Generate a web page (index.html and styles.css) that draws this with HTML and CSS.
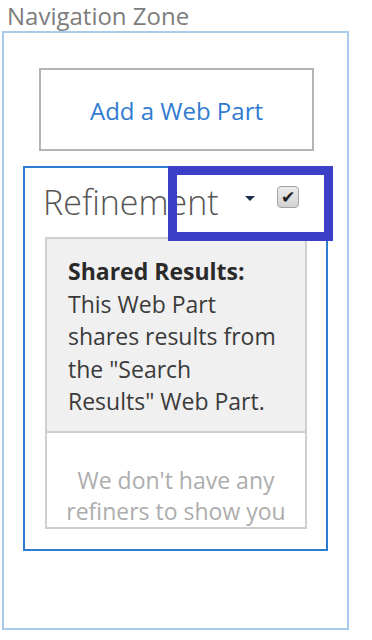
FILE: index.html
```html
<!DOCTYPE html>
<html lang="en">
<head>
    <meta charset="UTF-8">
    <meta name="viewport" content="width=device-width, initial-scale=1.0">
    <title>Navigation Zone</title>
    <link rel="stylesheet" href="styles.css">
</head>
<body>
    <div class="zone-title">Navigation Zone</div>
    <div class="zone">
        <div class="add-part">Add a Web Part</div>

        <div class="webpart">
            <div class="webpart-head">
                <span class="webpart-title">Refinement</span>
                <span class="menu-arrow"></span>
                <span class="select-box">&#10004;</span>
            </div>
            <div class="panel">
                <div class="shared">
                    <b>Shared Results:</b><br>
                    This Web Part shares results from the "Search Results" Web Part.
                </div>
                <div class="empty">We don't have any refiners to show you</div>
            </div>
            <!-- callout around the menu + checkbox -->
            <div class="highlight"></div>
        </div>
    </div>
</body>
</html>
```

FILE: styles.css
```css
body {
    margin: 0;
    background: #fff;
    font-family: 'Open Sans', sans-serif;
}
.zone-title {
    height: 31px;
    padding-left: 7px;
    font-size: 24px;
    line-height: 32px;
    color: #7d7d7d;
    white-space: nowrap;
}
.zone {
    box-sizing: border-box;
    margin-left: 2px;
    width: 347px;
    height: 599px;
    border: 2px solid #a8cbeb;
    padding-top: 35px;
}
.add-part {
    box-sizing: border-box;
    margin-left: 35px;
    width: 275px;
    height: 83px;
    border: 2px solid #b4b4b4;
    display: flex;
    align-items: center;
    justify-content: center;
    color: #2f7bd0;
    font-size: 24px;
    padding-top: 2px;
}
.webpart {
    position: relative;
    box-sizing: border-box;
    margin-top: 15px;
    margin-left: 19px;
    width: 305px;
    height: 385px;
    border: 2px solid #2c7dd2;
}
.webpart-head {
    box-sizing: border-box;
    height: 69px;
    display: flex;
    align-items: flex-start;
    padding: 14px 0 0 18px;
}
.webpart-title {
    font-size: 34px;
    line-height: 40px;
    font-weight: 300;
    color: #555;
    width: 202px;
    white-space: nowrap;
}
.menu-arrow {
    width: 0;
    height: 0;
    margin-top: 14px;
    border-left: 5px solid transparent;
    border-right: 5px solid transparent;
    border-top: 5px solid #1c2f4d;
}
.select-box {
    box-sizing: border-box;
    margin-left: 22px;
    margin-top: 4px;
    width: 22px;
    height: 22px;
    border: 1px solid #a4a4a4;
    border-radius: 4px;
    background: linear-gradient(#ececec, #d2d2d2);
    color: #1e1e1e;
    font-family: 'DejaVu Sans', sans-serif;
    font-size: 17px;
    line-height: 20px;
    text-align: center;
}
.panel {
    box-sizing: border-box;
    margin-left: 20px;
    width: 262px;
    height: 292px;
    border: 2px solid #cfcfcf;
    overflow: hidden;
}
.shared {
    box-sizing: border-box;
    height: 194px;
    padding: 16px 22px 0 21px;
    background: #f0f0f0;
    border-bottom: 2px solid #cfcfcf;
    font-size: 23px;
    line-height: 32.5px;
    color: #3a3a3a;
}
.shared b {
    color: #2a2a2a;
}
.empty {
    padding: 32px 2px 0;
    text-align: center;
    font-size: 23px;
    line-height: 31px;
    color: #adadad;
}
.highlight {
    position: absolute;
    left: 143px;
    top: -2px;
    width: 165px;
    height: 75px;
    box-sizing: border-box;
    border: 9px solid #3c3fc8;
}
```
